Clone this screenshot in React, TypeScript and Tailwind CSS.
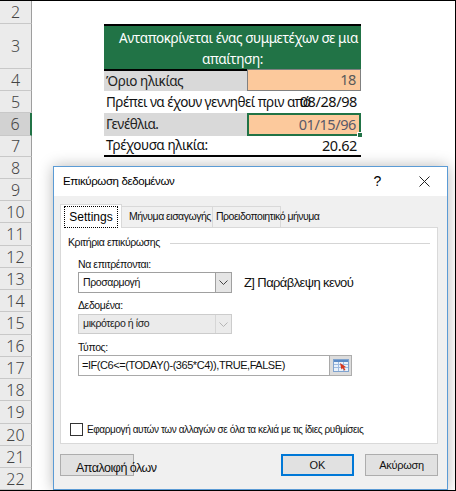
import React from 'react';

const ui = "font-['Liberation_Sans',Arial,sans-serif]";
const sheetFont = "font-['Noto_Sans','Liberation_Sans',sans-serif]";

function RowHead({ n, h, selected }: { n: number; h: string; selected?: boolean }) {
  return (
    <div
      className={`flex w-[32px] shrink-0 items-center justify-center border-b border-[#c8c8c8] text-[16px] font-light text-[#444] ${h} ${
        selected ? 'border-r-2 border-r-[#217346] bg-[#d2d2d2]' : 'border-r border-r-[#9e9e9e] bg-[#ebebeb]'
      }`}
    >
      {n}
    </div>
  );
}

function Chevron({ color = '#444' }: { color?: string }) {
  return (
    <svg width="9" height="5" viewBox="0 0 9 5">
      <path d="M0.5 0.5 L4.5 4.5 L8.5 0.5" fill="none" stroke={color} strokeWidth="1" />
    </svg>
  );
}

function RefIcon() {
  return (
    <svg width="16" height="13" viewBox="0 0 16 13">
      <rect x="0.5" y="0.5" width="15" height="12" fill="#eaf2fb" stroke="#7fa3cf" />
      <rect x="1" y="1" width="14" height="2" fill="#5b8ac6" />
      <path d="M1 5.5 H15 M1 8.5 H15 M5.5 3 V12 M10.5 3 V12" stroke="#9fbbe0" strokeWidth="1" />
      <path d="M7 4 L13 8 L11 8.5 L12.5 11 L11.2 11.6 L9.8 9.2 L8.4 10.5 Z" fill="#d9371c" />
    </svg>
  );
}

const lowerRows: [number, string][] = [
  [8, 'h-[22px]'],
  [9, 'h-[22px]'],
  [10, 'h-[22px]'],
  [11, 'h-[23px]'],
  [12, 'h-[22px]'],
  [13, 'h-[22px]'],
  [14, 'h-[22px]'],
  [15, 'h-[23px]'],
  [16, 'h-[22px]'],
  [17, 'h-[22px]'],
  [18, 'h-[22px]'],
  [19, 'h-[23px]'],
  [20, 'h-[22px]'],
  [21, 'h-[22px]'],
  [22, 'h-[22px]'],
];

function Sheet() {
  return (
    <div className={`flex flex-col ${sheetFont}`}>
      <div className="flex">
        <RowHead n={2} h="h-[23px]" />
        <div className="flex-1" />
      </div>
      <div className="flex">
        <RowHead n={3} h="h-[45px]" />
        <div className="flex-1 pl-[72px]">
          <div className="flex h-[45px] w-[257px] flex-col items-center border-t-2 border-black bg-[#217346] pt-[2px] text-[13.5px] leading-[21px] tracking-[-0.4px] text-white">
            <span className="whitespace-nowrap pl-[12px]">Ανταποκρίνεται ένας συμμετέχων σε μια</span>
            <span>απαίτηση:</span>
          </div>
        </div>
      </div>
      <div className="flex">
        <RowHead n={4} h="h-[22px]" />
        <div className="flex flex-1 pl-[72px] text-[13.5px] tracking-[-0.4px]">
          <div className="flex h-[22px] w-[143px] items-center border-t-2 border-black bg-[#d9d9d9] pl-[2px] text-[#222]">
            Όριο ηλικίας
          </div>
          <div className="flex h-[22px] w-[114px] items-center justify-end border border-[#808080] bg-[#fcc99c] pr-[4px] text-[14.5px] text-[#595959]">
            18
          </div>
        </div>
      </div>
      <div className="flex">
        <RowHead n={5} h="h-[22px]" />
        <div className="flex flex-1 pl-[72px] text-[13.5px] tracking-[-0.5px] text-[#111]">
          <div className="flex h-[22px] w-[143px] items-center whitespace-nowrap pl-[2px]">
            Πρέπει να έχουν γεννηθεί πριν από
          </div>
          <div className="flex h-[22px] w-[114px] items-center justify-end pr-[4px] text-[14.5px] tracking-[-0.4px]">08/28/98</div>
        </div>
      </div>
      <div className="flex">
        <RowHead n={6} h="h-[23px]" selected />
        <div className="flex flex-1 pl-[72px] text-[13.5px] tracking-[-0.4px]">
          <div className="flex h-[23px] w-[143px] items-center bg-[#d9d9d9] pl-[2px] text-[#222]">Γενέθλια.</div>
          <div className="relative flex h-[23px] w-[114px] items-center justify-end border-2 border-[#217346] bg-[#fcc99c] pr-[3px] text-[14.5px] text-[#595969]">
            01/15/96
            <span className="absolute -bottom-[4px] -right-[4px] h-[6px] w-[6px] border border-white bg-[#217346]" />
          </div>
        </div>
      </div>
      <div className="flex">
        <RowHead n={7} h="h-[21px]" />
        <div className="flex flex-1 pl-[72px] text-[13.5px] tracking-[-0.4px] text-[#111]">
          <div className="flex h-[21px] w-[257px] items-center justify-between border-b-2 border-black pl-[2px] pr-[4px]">
            <span>Τρέχουσα ηλικία:</span>
            <span className="text-[14.5px]">20.62</span>
          </div>
        </div>
      </div>
      {lowerRows.map(([n, h]) => (
        <div key={n} className="flex">
          <RowHead n={n} h={h} />
          <div className="flex-1" />
        </div>
      ))}
    </div>
  );
}

function Dialog() {
  return (
    <div
      className={`absolute left-[53px] top-[165px] flex h-[324px] w-[395px] flex-col border border-[#5b9bd5] bg-[#f0f0f0] shadow-[0_0_14px_rgba(0,0,0,0.28)] ${ui}`}
    >
      {/* title bar */}
      <div className="flex h-[29px] items-center bg-white pl-[9px] pr-[17px] text-[11.5px] tracking-[-0.4px] text-black">
        <span className="flex-1">Επικύρωση δεδομένων</span>
        <span className="mr-[38px] text-[14px]">?</span>
        <svg width="11" height="11" viewBox="0 0 11 11">
          <path d="M0.5 0.5 L10.5 10.5 M10.5 0.5 L0.5 10.5" stroke="#222" strokeWidth="1" />
        </svg>
      </div>

      <div className="flex flex-1 flex-col px-[6px] pt-[8px]">
        {/* tabs */}
        <div className="flex h-[23px] items-end whitespace-nowrap text-[10.5px] tracking-[-0.5px] text-[#111]">
          <div className="z-10 -mb-px flex h-[24px] w-[62px] items-center justify-center border border-b-0 border-[#d9d9d9] bg-white">
            <span className="border border-dotted border-black px-[4px] py-[1px] text-[12px] tracking-[0px] text-black">Settings</span>
          </div>
          <div className="flex h-[21px] w-[91px] items-center border border-b-0 border-l-0 border-[#d9d9d9] pl-[7px]">
            Μήνυμα εισαγωγής
          </div>
          <div className="flex h-[21px] w-[68px] items-center overflow-visible border border-b-0 border-l-0 border-[#d9d9d9] pl-[3px]">
            Προειδοποιητικό μήνυμα
          </div>
        </div>

        {/* tab page */}
        <div className="flex h-[217px] w-[378px] flex-col border border-[#d9d9d9] bg-white pl-[7px] text-[10.5px] tracking-[-0.4px] text-[#111]">
          <div className="mt-[8px] flex h-[14px] items-center pr-[7px]">
            <span>Κριτήρια επικύρωσης</span>
            <span className="ml-[10px] h-px flex-1 bg-[#d5d5d5]" />
          </div>

          <div className="pl-[10px]">
            <div className="mt-[7px] h-[14px] leading-[14px]">Να επιτρέπονται:</div>
            <div className="mt-px flex items-center">
              <div className="flex h-[21px] w-[154px] items-center border border-[#a0a0a0] bg-white">
                <span className="flex-1 pl-[4px]">Προσαρμογή</span>
                <span className="flex h-full w-[16px] items-center justify-center border-l border-[#a0a0a0] bg-[#e5e5e5]">
                  <Chevron />
                </span>
              </div>
              <span className="ml-[12px] text-[13px] tracking-[-0.6px] text-[#111]">Ζ] Παράβλεψη κενού</span>
            </div>

            <div className="mt-[5px] h-[14px] leading-[14px]">Δεδομένα:</div>
            <div className="mt-[2px] flex h-[20px] w-[154px] items-center border border-[#cccccc] bg-[#ebebeb]">
              <span className="flex-1 pl-[4px] text-[#222]">μικρότερο ή ίσο</span>
              <span className="flex h-full w-[16px] items-center justify-center border-l border-[#d6d6d6]">
                <Chevron color="#b5b5b5" />
              </span>
            </div>

            <div className="mt-[6px] h-[14px] leading-[14px]">Τύπος:</div>
            <div className="mt-px flex h-[21px] items-stretch">
              <div className="flex w-[252px] items-center whitespace-nowrap border border-[#a9a9a9] bg-white pl-[3px] text-[11px] tracking-[-0.45px] text-[#111]">
                =IF(C6&lt;=(TODAY()-(365*C4)),TRUE,FALSE)
              </div>
              <div className="flex w-[22px] items-center justify-center border border-l-0 border-[#adadad] bg-[#dcdcdc]">
                <RefIcon />
              </div>
            </div>
          </div>

          <div className="mt-[46px] flex items-center pl-[2px]">
            <span className="h-[13px] w-[13px] border border-[#333] bg-white" />
            <span className="ml-[4px] whitespace-nowrap text-[10px] tracking-[-0.4px]">
              Εφαρμογή αυτών των αλλαγών σε όλα τα κελιά με τις ίδιες ρυθμίσεις
            </span>
          </div>
        </div>

        {/* buttons */}
        <div className="mt-[10px] flex h-[22px] items-stretch">
          <div className="w-[74px] overflow-visible whitespace-nowrap border border-[#adadad] bg-[#e1e1e1] pl-[15px] pt-[5px] text-[12.5px] leading-[16px] tracking-[-0.5px] text-[#111]">
            Απαλοιφή όλων
          </div>
          <div className="ml-[147px] flex w-[73px] items-center justify-center border-2 border-[#0078d7] bg-[#e1e1e1] text-[11px] text-[#111]">
            OK
          </div>
          <div className="ml-[11px] flex w-[73px] items-center justify-center border border-[#adadad] bg-[#e1e1e1] text-[11px] tracking-[-0.3px] text-[#111]">
            Ακύρωση
          </div>
        </div>
      </div>
    </div>
  );
}

export default function App() {
  return (
    <div className="relative h-[491px] w-[456px] overflow-hidden border-b border-r border-t border-black bg-white">
      <Sheet />
      <Dialog />
    </div>
  );
}
